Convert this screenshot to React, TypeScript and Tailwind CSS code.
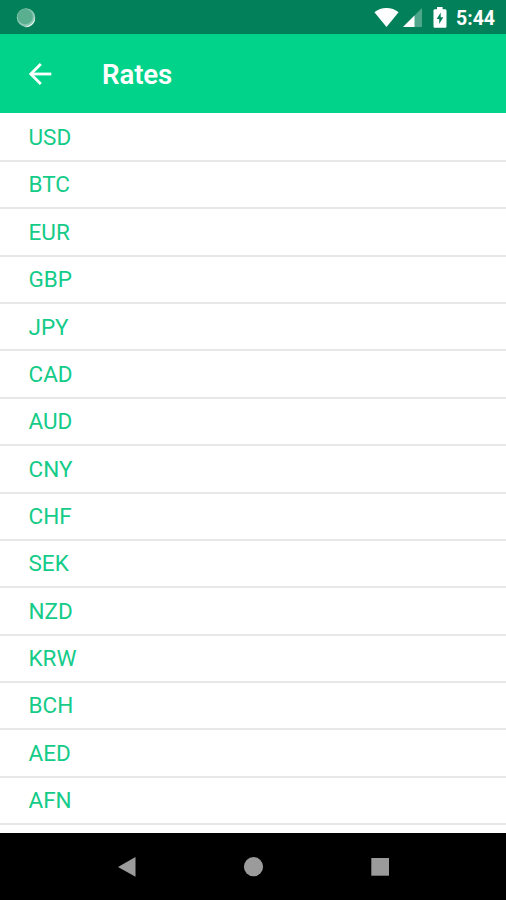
const currencies = [
  "USD", "BTC", "EUR", "GBP", "JPY", "CAD", "AUD", "CNY",
  "CHF", "SEK", "NZD", "KRW", "BCH", "AED", "AFN",
];

function StatusBar() {
  return (
    <div className="flex h-[34px] shrink-0 items-center bg-[#028059] pl-4 pr-[10px] text-white">
      <svg width="20" height="20" viewBox="0 0 20 20" className="mt-px">
        <circle cx="10" cy="9.5" r="9.3" fill="#8cc8b3" />
        <circle cx="9.2" cy="8.7" r="7.6" fill="#5aaf91" />
        <path d="M18.8 8.5a9 9 0 0 1-12.3 10 10.5 10.5 0 0 0 12.3-10Z" fill="#f0faf6" />
      </svg>
      <div className="ml-auto flex items-center pt-px">
        <svg width="25" height="19" viewBox="0 0 26 20" fill="currentColor">
          <path d="M13 20 .3 4.4C3.8 1.6 8.2 0 13 0s9.2 1.6 12.7 4.4L13 20Z" />
        </svg>
        <svg width="19" height="19" viewBox="0 0 19 19" fill="currentColor" className="ml-[4px]">
          <path d="M0 19 19 0v19H0Z" fillOpacity="0.3" />
          <path d="M0 19 11.5 7.5V19H0Z" />
        </svg>
        <svg width="14" height="21" viewBox="0 0 14 21" className="ml-[11px]">
          <path d="M4 0h5.6v2.2H12c.8 0 1.5.6 1.5 1.4v15.8c0 .8-.7 1.4-1.5 1.4H2c-.8 0-1.5-.6-1.5-1.4V3.6c0-.8.7-1.4 1.5-1.4h2V0Z" fill="#fff" />
          <path d="M7.7 5.5v4.8h2.6L6.2 17v-4.9H3.7l4-6.6Z" fill="#028059" />
        </svg>
        <span className="ml-[9px] mt-[2px] w-[40px] text-[19.5px] font-bold leading-none">5:44</span>
      </div>
    </div>
  );
}

function Header() {
  return (
    <header className="flex h-[78.5px] shrink-0 items-center bg-[#02d38a] pl-[28px] text-white">
      <svg width="24" height="24" viewBox="0 0 24 24" fill="none" stroke="currentColor" strokeWidth="2.8" className="mt-px">
        <path d="M23.3 12H2.8" />
        <path d="M12.8 2 2.8 12l10 10" />
      </svg>
      <h1 className="ml-[50px] mt-[4px] text-[27.6px] font-semibold leading-none tracking-[-0.1px]">Rates</h1>
    </header>
  );
}

function NavBar() {
  return (
    <nav className="h-[67px] shrink-0 bg-black">
      <svg width="506" height="67" viewBox="0 0 506 67" fill="#9b9b9b">
        <path d="M118 34 135.5 24v19.8L118 34Z" />
        <circle cx="253.5" cy="33.7" r="9.6" />
        <rect x="371.3" y="25" width="17.7" height="17.7" />
      </svg>
    </nav>
  );
}

export default function App() {
  return (
    <div className="flex h-[900px] w-[506px] flex-col overflow-hidden bg-white font-['Roboto',sans-serif]">
      <StatusBar />
      <Header />
      <ul className="min-h-0 flex-1 overflow-hidden pt-[2.2px]">
        {currencies.map((code) => (
          <li
            key={code}
            className="flex h-[47.37px] items-center border-b-2 border-[#e7e7e7] pl-[28.5px] text-[22.5px] leading-none text-[#14cb88]"
          >
            {code}
          </li>
        ))}
      </ul>
      <NavBar />
    </div>
  );
}
